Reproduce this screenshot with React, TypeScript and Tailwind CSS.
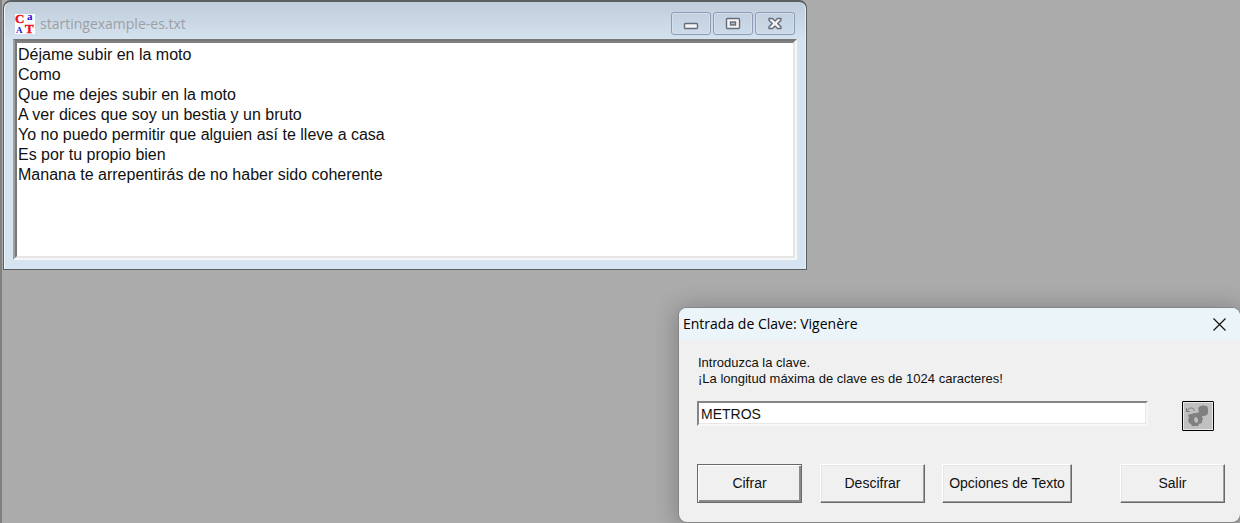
import React, { useState } from "react";

const INITIAL_TEXT = [
  "Déjame subir en la moto",
  "Como",
  "Que me dejes subir en la moto",
  "A ver dices que soy un bestia y un bruto",
  "Yo no puedo permitir que alguien así te lleve a casa",
  "Es por tu propio bien",
  "Manana te arrepentirás de no haber sido coherente",
].join("\n");

function AppIcon() {
  return (
    <svg viewBox="0 0 20 20" className="size-5 shrink-0 overflow-visible" aria-hidden="true">
      <rect width="20" height="20" fill="#fff" />
      <g fontFamily="Liberation Serif, serif" fontWeight="bold">
        <text x="0" y="9" fontSize="13" fill="#f00f1b" stroke="#f00f1b" strokeWidth="0.4">C</text>
        <text x="12" y="6" fontSize="11" fill="#1616e0">a</text>
        <text x="1" y="19" fontSize="9" fill="#1616e0">A</text>
        <text x="10" y="19" fontSize="13" fill="#f00f1b" stroke="#f00f1b" strokeWidth="0.4">T</text>
      </g>
    </svg>
  );
}

function CaptionButton({ label, children }: { label: string; children: React.ReactNode }) {
  return (
    <button
      type="button"
      aria-label={label}
      className="flex h-[23px] w-10 items-center justify-center rounded-[3px] border border-[#8e9bb8] bg-linear-to-b from-[#c2d0df] to-[#ccdae9] shadow-[inset_0_0_0_1px_#d3dfeb]"
    >
      <svg viewBox="0 0 16 14" className="h-3.5 w-4" aria-hidden="true">
        {children}
      </svg>
    </button>
  );
}

function EditorWindow() {
  const [text, setText] = useState(INITIAL_TEXT);
  return (
    <section className="absolute top-0 left-[3px] flex h-[270px] w-[804px] flex-col rounded-t-lg border border-t-2 border-[#5c5f61] bg-linear-to-b from-[#bfcddb] to-[#d6e4f2] to-[40px] px-[9px] pb-[9px] shadow-[inset_1px_0_0_#eef4fa,inset_-1px_0_0_#e6eef6]">
      <header className="flex h-[37px] items-center justify-between pt-[6px]">
        <div className="flex items-center gap-[5px] pl-[2px]">
          <AppIcon />
          <h1 className="font-['Open_Sans','Noto_Sans',sans-serif] text-[14px] leading-5 text-[#9c9fa3]">
            startingexample-es.txt
          </h1>
        </div>
        <div className="flex gap-[2px] pr-[2px]">
          <CaptionButton label="Minimizar">
            <rect x="1.5" y="6.5" width="13" height="5" rx="1" fill="#f5f5f5" stroke="#656b78" strokeWidth="1.4" />
          </CaptionButton>
          <CaptionButton label="Maximizar">
            <rect x="1.5" y="1.5" width="13" height="10" rx="1" fill="#f5f5f5" stroke="#656b78" strokeWidth="1.4" />
            <rect x="5.5" y="5" width="5" height="3" fill="#aebccd" stroke="#656b78" strokeWidth="1.4" />
          </CaptionButton>
          <CaptionButton label="Cerrar">
            <path
              d="M2 1.5h3.500L8 4l2.500-2.500H14v1.800L10.700 6.500 14 9.700v1.800h-3.500L8 9l-2.500 2.500H2V9.700l3.300-3.200L2 3.300z"
              fill="#f5f5f5"
              stroke="#656b78"
              strokeWidth="1.4"
              strokeLinejoin="round"
            />
          </CaptionButton>
        </div>
      </header>
      <div className="flex flex-1 border-2 border-t-[#777777] border-r-[#f7f7f7] border-b-[#f7f7f7] border-l-[#a0a0a0]">
        <textarea
          aria-label="startingexample-es.txt"
          spellCheck={false}
          value={text}
          onChange={(e) => setText(e.target.value)}
          className="block w-full flex-1 resize-none overflow-hidden border-2 border-t-[#808080] border-r-[#e6e6e6] border-b-[#e6e6e6] border-l-[#777777] bg-white pt-[2px] pl-px font-['Liberation_Sans',Arial,sans-serif] text-[16px] leading-5 text-[#111111] outline-none"
        />
      </div>
    </section>
  );
}

function DialogButton({ className, primary, children }: { className: string; primary?: boolean; children: React.ReactNode }) {
  const edge = primary
    ? "border border-[#696969] shadow-[inset_1px_1px_0_#ffffff,inset_-2px_-2px_0_#8a8a8a]"
    : "border border-t-white border-l-white border-r-[#696969] border-b-[#696969] shadow-[inset_-1px_-1px_0_#a0a0a0,inset_1px_1px_0_#e6e6e6]";
  return (
    <button type="button" className={`h-[39px] whitespace-nowrap bg-[#f0f0f0] pb-[2px] text-center ${edge} ${className}`}>
      {children}
    </button>
  );
}

function KeyDialog() {
  const [key, setKey] = useState("METROS");
  return (
    <section
      role="dialog"
      aria-labelledby="dialog-title"
      className="absolute top-[308px] right-0 h-[214px] w-[561px] overflow-hidden rounded-lg bg-[#f0f0f0] shadow-[0_0_0_1px_#858585,0_2px_22px_4px_rgba(0,0,0,0.22)]"
    >
      <header className="flex h-8 items-center justify-between bg-[#ebf4f8] pr-[14px] pl-1">
        <h2 id="dialog-title" className="font-['Open_Sans','Noto_Sans',sans-serif] text-[14px] leading-5 text-black">
          Entrada de Clave: Vigenère
        </h2>
        <button type="button" aria-label="Cerrar" className="flex size-[13px] items-center justify-center">
          <svg viewBox="0 0 13 13" className="size-[13px]" aria-hidden="true">
            <path d="M.5.5l12 12M12.500.5l-12 12" stroke="#111" strokeWidth="1.200" fill="none" />
          </svg>
        </button>
      </header>
      <div className="pt-[15px] pr-[15px] pl-[18px] font-['Liberation_Sans',Arial,sans-serif] text-[14px] leading-4 text-[#111111]">
        <label htmlFor="key" className="block pl-px text-[13px] leading-4">
          Introduzca la clave.
          <br />
          ¡La longitud máxima de clave es de 1024 caracteres!
        </label>
        <div className="mt-[14px] flex items-start justify-between pr-[11px]">
          <input
            id="key"
            type="text"
            value={key}
            onChange={(e) => setKey(e.target.value)}
            className="h-[25px] w-[451px] border-2 border-t-[#858585] border-r-[#f7f7f7] border-b-[#f7f7f7] border-l-[#858585] bg-white pl-[2px] shadow-[inset_-1px_-1px_0_#e6e6e6] outline-none"
          />
          <button
            type="button"
            aria-label="Generar clave"
            disabled
            className="h-[30px] w-8 rounded-[1px] border border-black bg-[#c0c0c0] shadow-[inset_0_0_0_1px_#e8e8e8]"
          >
            <svg viewBox="0 0 30 28" className="h-7 w-[30px]" aria-hidden="true">
              <g fill="#808080">
                <path
                  fillRule="evenodd"
                  d="M15 6l2-2h2l1-1 2 1h2l1 3v4l-1 2-3 1h-2l1 3-1 2v2l-3 1-1 2H9l-1-2-2-1-1-3 1-2-1-3 2-1h2l2-1h3l2-1zM12 15l-1 3 1 2 2 1 1-2v-2l-2-2z"
                />
                <path d="M3 6h1v3h3v1H3z" />
              </g>
              <path d="M4 9q3-5 7-2v2" fill="none" stroke="#808080" />
            </svg>
          </button>
        </div>
        <div className="mt-[33px] flex items-center">
          <DialogButton primary className="w-[105px]">Cifrar</DialogButton>
          <DialogButton className="ml-[18px] w-[105px]">Descifrar</DialogButton>
          <DialogButton className="ml-[17px] w-[130px]">Opciones de Texto</DialogButton>
          <DialogButton className="ml-auto w-[105px]">Salir</DialogButton>
        </div>
      </div>
    </section>
  );
}

export default function App() {
  return (
    <main className="relative h-screen overflow-hidden border-l-2 border-[#808080] bg-[#ababab]">
      <div className="absolute inset-y-0 -left-[2px] right-0">
        <EditorWindow />
        <KeyDialog />
      </div>
    </main>
  );
}
